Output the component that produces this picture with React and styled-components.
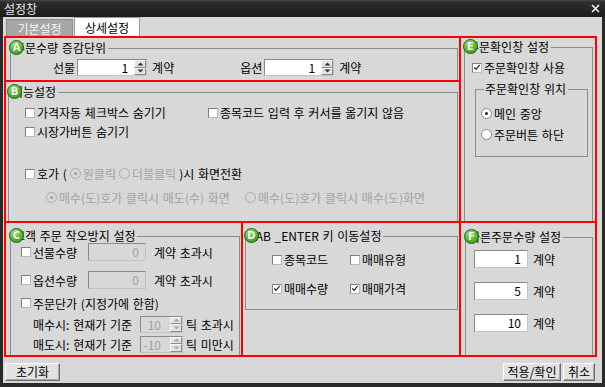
import styled, { createGlobalStyle } from "styled-components";

const GlobalStyle = createGlobalStyle`
  html, body {
    margin: 0;
    padding: 0;
    background: #d8d8d8;
  }
  body {
    font-family: "Noto Sans CJK KR", "Noto Sans", sans-serif;
    font-size: 12px;
    word-spacing: 1px;
    color: #000;
  }
  * {
    box-sizing: border-box;
  }
`;

const Arrow = ({ up, color = "#333" }) => (
  <svg width="7" height="4" viewBox="0 0 7 4">
    <path d={up ? "M0.5 3.5 L3.5 0.5 L6.5 3.5 Z" : "M0.5 0.5 L3.5 3.5 L6.5 0.5 Z"} fill={color} />
  </svg>
);

const Tick = () => (
  <svg width="9" height="9" viewBox="0 0 9 9">
    <path d="M1.5 4.5 L3.5 6.5 L7.5 1.5" fill="none" stroke="#222" strokeWidth="1.3" />
  </svg>
);

const CloseIcon = () => (
  <svg width="9" height="9" viewBox="0 0 9 9">
    <path d="M1 1 L8 8 M8 1 L1 8" stroke="#f0f0f0" strokeWidth="1.6" />
  </svg>
);

const Check = ({ checked, children }) => (
  <Option>
    <Box>{checked && <Tick />}</Box>
    {children}
  </Option>
);

const Radio = ({ checked, disabled, children }) => (
  <Option $disabled={disabled}>
    <Circle $disabled={disabled}>{checked && <Dot $disabled={disabled} />}</Circle>
    {children}
  </Option>
);

const Spin = ({ value, width, disabled }) => (
  <SpinBox $w={width} $disabled={disabled}>
    <SpinValue $disabled={disabled}>{value}</SpinValue>
    <SpinButtons>
      <SpinHalf>
        <Arrow up color={disabled ? "#a8a8a8" : "#333"} />
      </SpinHalf>
      <SpinHalf>
        <Arrow color={disabled ? "#a8a8a8" : "#333"} />
      </SpinHalf>
    </SpinButtons>
  </SpinBox>
);

const App = () => {
  return (
    <Window>
      <GlobalStyle />
      <TitleBar>
        <span>설정창</span>
        <CloseIcon />
      </TitleBar>
      <Frame>
        <TabBar>
          <Tab $w={67}>기본설정</Tab>
          <Tab $w={66} $active>
            상세설정
          </Tab>
        </TabBar>

        <Panel>
          <Cell $area="1 / 1 / 2 / 3">
            <GroupBox $m="3px 1px 0 4px" $grow>
              <Legend $indent={2}>
                <Badge>A</Badge>주문수량 증감단위
              </Legend>
              <Row $top={4} $left={42} $gap={66} $h={17}>
                <Field>
                  <span>선물</span>
                  <Spin value="1" width={70} />
                  <Unit>계약</Unit>
                </Field>
                <Field>
                  <span>옵션</span>
                  <Spin value="1" width={70} />
                  <Unit>계약</Unit>
                </Field>
              </Row>
            </GroupBox>
          </Cell>

          <Cell $area="2 / 1 / 3 / 3">
            <GroupBox $m="3px 1px 0 2px" $grow>
              <Legend $indent={2}>
                <Badge>B</Badge>기능설정
              </Legend>
              <Row $top={4} $left={16} $cols="183px auto">
                <Check>가격자동 체크박스 숨기기</Check>
                <Check>종목코드 입력 후 커서를 옮기지 않음</Check>
              </Row>
              <Row $left={16}>
                <Check>시장가버튼 숨기기</Check>
              </Row>
              <Row $top={23} $left={16} $gap={3}>
                <Check>호가 (</Check>
                <Radio checked disabled>
                  원클릭
                </Radio>
                <Radio disabled>더블클릭</Radio>
                <span>)시 화면전환</span>
              </Row>
              <Row $top={5} $left={37} $cols="199px auto">
                <Radio checked disabled>
                  매수(도)호가 클릭시 매도(수) 화면
                </Radio>
                <Radio disabled>매수(도)호가 클릭시 매수(도)화면</Radio>
              </Row>
            </GroupBox>
          </Cell>

          <Cell $area="1 / 3 / 3 / 4">
            <GroupBox $m="2px 2px 0 3px" $grow>
              <Legend $indent={2}>
                <Badge>E</Badge>주문확인창 설정
              </Legend>
              <Row $top={4} $left={7}>
                <Check checked>주문확인창 사용</Check>
              </Row>
              <GroupBox $m="5px 4px 0 10px" $h={75}>
                <Legend $indent={8}>주문확인창 위치</Legend>
                <Row $top={8} $left={5}>
                  <Radio checked>메인 중앙</Radio>
                </Row>
                <Row $top={2} $left={5}>
                  <Radio>주문버튼 하단</Radio>
                </Row>
              </GroupBox>
            </GroupBox>
          </Cell>

          <Cell $area="3 / 1 / 4 / 2">
            <GroupBox $m="6px 1px 0 4px" $grow>
              <Legend $indent={2}>
                <Badge>C</Badge>고객 주문 착오방지 설정
              </Legend>
              <Row $top={0} $left={10} $h={18}>
                <Check>
                  <Label $w={55}>선물수량</Label>
                </Check>
                <TextBox $w={58} $disabled>
                  0
                </TextBox>
                <Unit $l={8}>계약 초과시</Unit>
              </Row>
              <Row $top={10} $left={10} $h={18}>
                <Check>
                  <Label $w={55}>옵션수량</Label>
                </Check>
                <TextBox $w={58} $disabled>
                  0
                </TextBox>
                <Unit $l={8}>계약 초과시</Unit>
              </Row>
              <Row $top={5} $left={10} $h={18}>
                <Check>주문단가 (지정가에 한함)</Check>
              </Row>
              <Row $top={3} $left={22} $h={18}>
                <Label $w={107}>매수시: 현재가 기준</Label>
                <Spin value="10" width={43} disabled />
                <Unit $l={3}>틱 초과시</Unit>
              </Row>
              <Row $top={2} $left={22} $h={18}>
                <Label $w={107}>매도시: 현재가 기준</Label>
                <Spin value="-10" width={43} disabled />
                <Unit $l={3}>틱 미만시</Unit>
              </Row>
            </GroupBox>
          </Cell>

          <Cell $area="3 / 2 / 4 / 3">
            <GroupBox $m="6px 1px 0 2px" $h={81}>
              <Legend $indent={2}>
                <Badge>D</Badge>TAB _ENTER 키 이동설정
              </Legend>
              <Row $top={7} $left={26} $cols="78px auto">
                <Check>종목코드</Check>
                <Check>매매유형</Check>
              </Row>
              <Row $top={10} $left={26} $cols="78px auto">
                <Check checked>매매수량</Check>
                <Check checked>매매가격</Check>
              </Row>
            </GroupBox>
          </Cell>

          <Cell $area="3 / 3 / 4 / 4">
            <GroupBox $m="7px 2px 0 4px" $grow>
              <Legend $indent={2}>
                <Badge>F</Badge>빠른주문수량 설정
              </Legend>
              {["1", "5", "10"].map((v, i) => (
                <Row key={v} $top={i === 0 ? 6 : 14} $left={8} $h={18}>
                  <TextBox $w={54}>{v}</TextBox>
                  <Unit $l={5}>계약</Unit>
                </Row>
              ))}
            </GroupBox>
          </Cell>
        </Panel>

        <Footer>
          <Button $w={55}>초기화</Button>
          <Buttons>
            <Button $w={58}>적용/확인</Button>
            <Button $w={32}>취소</Button>
          </Buttons>
        </Footer>
      </Frame>
    </Window>
  );
};

const Window = styled.div`
  width: 605px;
  height: 387px;
  display: flex;
  flex-direction: column;
  background: #d8d8d8;
`;

const TitleBar = styled.div`
  height: 17px;
  flex: none;
  display: flex;
  align-items: center;
  justify-content: space-between;
  padding: 0 5px 0 4px;
  background: linear-gradient(#4a4a4a 0, #2e2e2e 2px, #1c1c1c 100%);
  color: #e8e8e8;
  font-size: 12px;
  line-height: 17px;
`;

const Frame = styled.div`
  flex: 1;
  display: flex;
  flex-direction: column;
  border: 3px solid #2a2a2a;
  border-top: none;
  border-bottom-width: 4px;
  background: #d8d8d8;
`;

const TabBar = styled.div`
  height: 19px;
  flex: none;
  display: flex;
  align-items: flex-end;
  gap: 1px;
  padding-left: 3px;
`;

const Tab = styled.div`
  width: ${(p) => p.$w}px;
  height: ${(p) => (p.$active ? 19 : 17)}px;
  display: flex;
  align-items: center;
  justify-content: center;
  background: ${(p) => (p.$active ? "#fff" : "#a6a6a6")};
  color: ${(p) => (p.$active ? "#000" : "#f6f6f6")};
  border: 1px solid ${(p) => (p.$active ? "#9a9a9a" : "#8e8e8e")};
  border-bottom: none;
  font-size: 12px;
`;

const Panel = styled.div`
  margin-left: 1px;
  width: 593px;
  height: 321px;
  flex: none;
  display: grid;
  grid-template-columns: 235px 216px 134px;
  grid-template-rows: 42px 139px 132px;
  gap: 2px;
  padding: 2px;
  background: #ff0000;
`;

const Cell = styled.div`
  grid-area: ${(p) => p.$area};
  background: #d8d8d8;
  display: flex;
  flex-direction: column;
  min-height: 0;
  overflow: hidden;
`;

const GroupBox = styled.fieldset`
  margin: ${(p) => p.$m};
  padding: 0;
  min-width: 0;
  border: 1px solid #8c8c8c;
  flex: ${(p) => (p.$grow ? "1 0 auto" : "none")};
  height: ${(p) => (p.$h ? `${p.$h}px` : "auto")};
  margin-bottom: ${(p) => (p.$grow ? "-2px" : "0")};
`;

const Legend = styled.legend`
  position: relative;
  margin-left: ${(p) => p.$indent}px;
  padding: 0 2px 0 1px;
  font-size: 12px;
  line-height: 14px;
  white-space: nowrap;
`;

const Badge = styled.span`
  position: absolute;
  left: -4px;
  top: -1px;
  width: 15px;
  height: 15px;
  border-radius: 50%;
  border: 1px solid #1f5f12;
  background: radial-gradient(circle at 40% 30%, #b9f08f 0, #5fc234 45%, #2b8714 100%);
  color: #fff;
  font-family: "DejaVu Sans", sans-serif;
  font-size: 10px;
  font-weight: bold;
  line-height: 13px;
  text-align: center;
  text-shadow: 0 0 1px #1f5f12;
`;

const Row = styled.div`
  display: ${(p) => (p.$cols ? "grid" : "flex")};
  grid-template-columns: ${(p) => p.$cols || "none"};
  align-items: center;
  gap: ${(p) => p.$gap || 0}px;
  height: ${(p) => p.$h || 19}px;
  margin-top: ${(p) => p.$top || 0}px;
  padding-left: ${(p) => p.$left || 0}px;
  white-space: nowrap;
`;

const Field = styled.div`
  display: flex;
  align-items: center;
  gap: 2px;
`;

const Unit = styled.span`
  margin-left: ${(p) => (p.$l === undefined ? 3 : p.$l)}px;
`;

const Label = styled.span`
  display: inline-block;
  width: ${(p) => p.$w}px;
`;

const Option = styled.span`
  display: inline-flex;
  align-items: center;
  gap: 2px;
  color: ${(p) => (p.$disabled ? "#a2a2a2" : "#000")};
`;

const Box = styled.span`
  width: 10px;
  height: 10px;
  flex: none;
  display: inline-flex;
  align-items: center;
  justify-content: center;
  background: #fff;
  border: 1px solid;
  border-color: #7e7e7e #b8b8b8 #b8b8b8 #7e7e7e;
`;

const Circle = styled.span`
  width: 11px;
  height: 11px;
  flex: none;
  display: inline-flex;
  align-items: center;
  justify-content: center;
  border-radius: 50%;
  background: ${(p) => (p.$disabled ? "#d8d8d8" : "#fff")};
  border: 1px solid ${(p) => (p.$disabled ? "#aaaaaa" : "#858585")};
`;

const Dot = styled.span`
  width: 3px;
  height: 3px;
  border-radius: 50%;
  background: ${(p) => (p.$disabled ? "#a0a0a0" : "#222")};
`;

const SpinBox = styled.span`
  width: ${(p) => p.$w}px;
  height: 17px;
  display: inline-flex;
  background: ${(p) => (p.$disabled ? "#d8d8d8" : "#fff")};
  border: 1px solid;
  border-color: #8a8a8a #c4c4c4 #c4c4c4 #8a8a8a;
`;

const SpinValue = styled.span`
  flex: 1;
  text-align: right;
  padding-right: ${(p) => (p.$disabled ? 9 : 6)}px;
  line-height: 15px;
  color: ${(p) => (p.$disabled ? "#a2a2a2" : "#000")};
`;

const SpinButtons = styled.span`
  width: 12px;
  display: flex;
  flex-direction: column;
`;

const SpinHalf = styled.span`
  flex: 1;
  display: flex;
  align-items: center;
  justify-content: center;
  background: #e4e4e4;
  border: 1px solid;
  border-color: #f8f8f8 #8a8a8a #8a8a8a #f8f8f8;
`;

const TextBox = styled.span`
  width: ${(p) => p.$w}px;
  height: 18px;
  display: inline-block;
  text-align: right;
  padding-right: 6px;
  line-height: 16px;
  background: ${(p) => (p.$disabled ? "#d8d8d8" : "#fff")};
  color: ${(p) => (p.$disabled ? "#a2a2a2" : "#000")};
  border: 1px solid;
  border-color: #8a8a8a #c4c4c4 #c4c4c4 #8a8a8a;
`;

const Footer = styled.div`
  flex: 1;
  display: flex;
  justify-content: space-between;
  align-items: flex-start;
  padding: 6px 7px 0 2px;
`;

const Buttons = styled.div`
  display: flex;
  gap: 2px;
`;

const Button = styled.button`
  width: ${(p) => p.$w}px;
  height: 18px;
  padding: 0;
  font-family: inherit;
  font-size: 12px;
  line-height: 14px;
  color: #000;
  background: #e2e2e2;
  border: 1px solid;
  border-color: #fff #6e6e6e #6e6e6e #fff;
  box-shadow: inset -1px -1px 0 #a8a8a8;
`;

export default App;
